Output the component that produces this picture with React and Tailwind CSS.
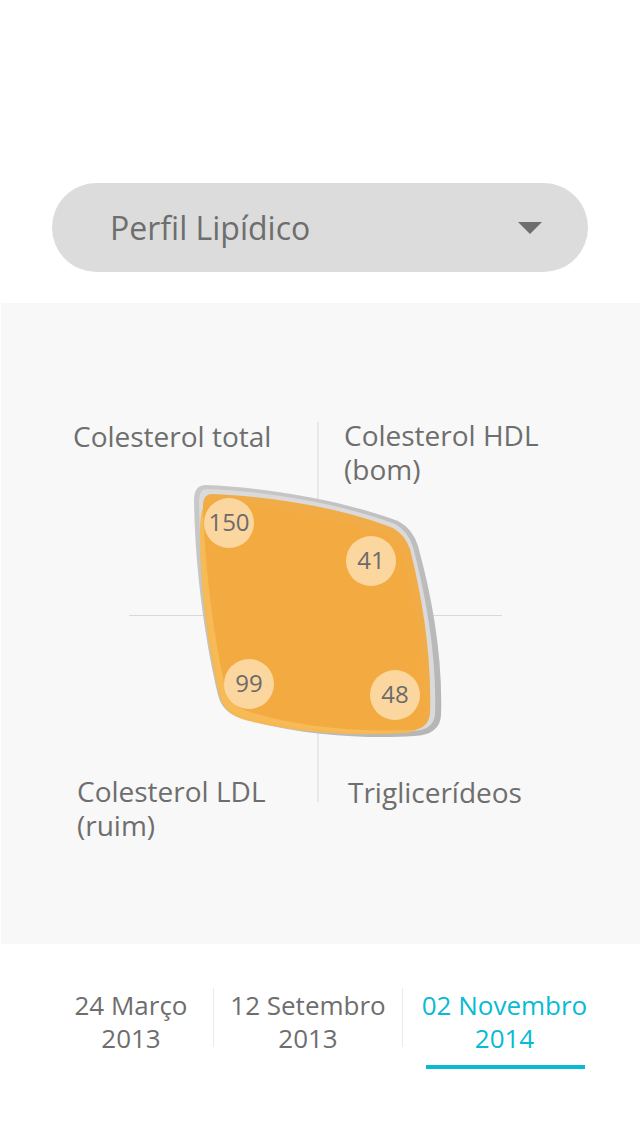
import React from "react";

const labelFont = { fontFamily: "'Open Sans', Lato, sans-serif" };

function Bubble({ cx, cy, value }) {
  return (
    <g>
      <circle cx={cx} cy={cy} r="25" fill="#fde8c4" opacity="0.72" />
      <text
        x={cx}
        y={cy + 8}
        textAnchor="middle"
        fontSize="24"
        fill="#6b6b6b"
        fontFamily="'Open Sans', Lato, sans-serif"
      >
        {value}
      </text>
    </g>
  );
}

function LipidChart() {
  return (
    <svg
      className="absolute inset-0"
      width="639"
      height="641"
      viewBox="0 0 639 641"
    >
      <defs>
        <linearGradient id="rim" x1="0" y1="0" x2="1" y2="1">
          <stop offset="0" stopColor="#c9c9c9" />
          <stop offset="1" stopColor="#b5b5b5" />
        </linearGradient>
      </defs>
      <g transform="translate(-1,-303)">
        {/* axes */}
        <line x1="318" y1="422" x2="318" y2="802" stroke="#d9d9d9" strokeWidth="1" />
        <line x1="129" y1="615.5" x2="502" y2="615.5" stroke="#d9d9d9" strokeWidth="1" />

        {/* grey rim */}
        <path
          d="M 206 485 C 262 487 342 500 398 521 Q 413 529 418 546 C 433 600 443 660 441 715 Q 440 735 414 736 C 370 739 300 736 240 718 Q 222 712 218 695 C 205 640 195 570 194 500 Q 194 485 206 485 Z"
          fill="url(#rim)"
        />
        <path
          d="M 207 489 C 262 491 340 503 395 524 Q 408 531 413 547 C 427 600 437 660 435 714 Q 434 730 413 731 C 370 734 300 732 240 715 Q 224 710 221 694 C 209 640 200 570 199 502 Q 199 489 207 489 Z"
          fill="#dadada"
        />

        {/* lighter back layer */}
        <path
          d="M 212 500 C 260 505 330 515 385 535 Q 400 542 404 556 C 418 610 426 665 424 716 Q 422 732 405 733 C 360 736 300 734 245 720 Q 225 714 220 698 C 208 650 200 590 200 530 Q 200 500 212 500 Z"
          fill="#f8b84c"
          opacity="0.92"
        />
        {/* main layer */}
        <path
          d="M 212 494 C 266 496 341 507 393 528 Q 405 535 410 549 C 423 600 432 660 430 714 Q 428 729 412 730 C 370 732 305 729 250 712 Q 230 706 226 690 C 214 640 205 570 203 506 Q 203 494 212 494 Z"
          fill="#f2aa40"
          opacity="0.95"
        />

        <Bubble cx={229} cy={523} value="150" />
        <Bubble cx={371} cy={561} value="41" />
        <Bubble cx={249} cy={684} value="99" />
        <Bubble cx={395} cy={695} value="48" />
      </g>
    </svg>
  );
}

export default function App() {
  return (
    <div className="w-[640px] h-[1122px] bg-white overflow-hidden" style={labelFont}>
      {/* Selector */}
      <div className="pt-[183px] px-[52px]">
        <div className="h-[89px] rounded-full bg-[#dcdcdc] flex items-center justify-between pl-[58px] pr-[46px]">
          <span className="text-[32px] text-[#6e6e6e] leading-none">Perfil Lipídico</span>
          <span className="w-0 h-0 border-l-[12px] border-r-[12px] border-t-[12px] border-l-transparent border-r-transparent border-t-[#6e6e6e]" />
        </div>
      </div>

      {/* Chart panel */}
      <div className="mt-[31px] ml-px h-[641px] bg-[#f8f8f8] relative">
        <LipidChart />
        <div className="absolute left-[72px] top-[116px] text-[28px] leading-[34px] text-[#6e6e6e]">
          Colesterol total
        </div>
        <div className="absolute left-[343px] top-[115px] text-[28px] leading-[34px] text-[#6e6e6e]">
          Colesterol HDL
          <br />
          (bom)
        </div>
        <div className="absolute left-[76px] top-[471px] text-[28px] leading-[34px] text-[#6e6e6e]">
          Colesterol LDL
          <br />
          (ruim)
        </div>
        <div className="absolute left-[347px] top-[472px] text-[28px] leading-[34px] text-[#6e6e6e]">
          Triglicerídeos
        </div>
      </div>

      {/* Dates */}
      <div className="mt-[44px] flex ml-[49px] text-[26px] leading-[33px] text-center">
        <div className="w-[164px] h-[59px] text-[#6e6e6e]">
          <div className="pt-[1px]">
            24 Março
            <br />
            2013
          </div>
        </div>
        <div className="w-[189px] h-[59px] border-l border-[#ebebeb] text-[#6e6e6e]">
          <div className="pt-[1px]">
            12 Setembro
            <br />
            2013
          </div>
        </div>
        <div className="w-[204px] h-[59px] border-l border-[#ebebeb] text-[#09bad4]">
          <div className="pt-[1px]">
            02 Novembro
            <br />
            2014
          </div>
        </div>
      </div>
      <div className="mt-[18px] ml-[426px] w-[159px] h-[4px] bg-[#09bad4]" />
    </div>
  );
}
